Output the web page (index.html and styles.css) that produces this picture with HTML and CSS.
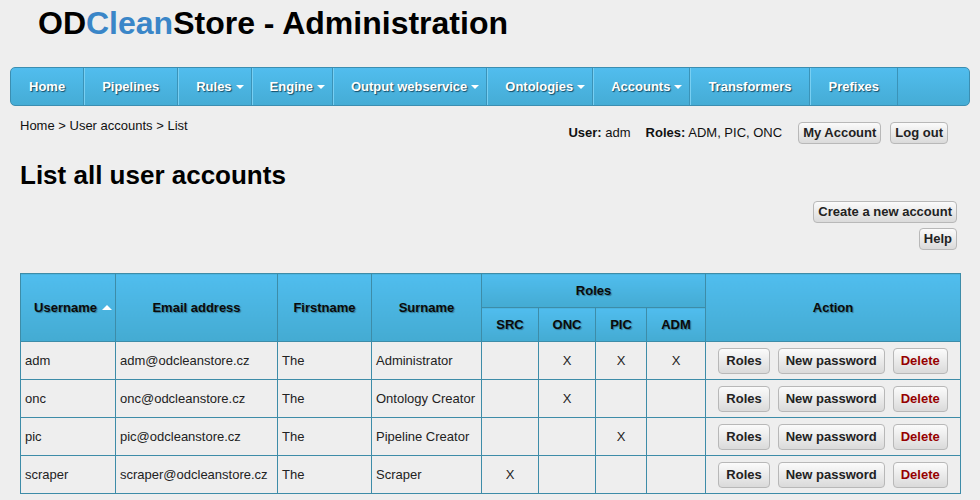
FILE: index.html
```html
<!DOCTYPE html>
<html>
<head>
<meta charset="utf-8">
<title>ODCleanStore - Administration</title>
<link rel="stylesheet" href="styles.css">
</head>
<body>
<h1 class="title">OD<span class="clean">Clean</span>Store - Administration</h1>
<ul class="nav">
  <li class="nav-item">Home</li>
  <li class="nav-item">Pipelines</li>
  <li class="nav-item drop">Rules<span class="caret"></span></li>
  <li class="nav-item drop">Engine<span class="caret"></span></li>
  <li class="nav-item drop">Output webservice<span class="caret"></span></li>
  <li class="nav-item drop">Ontologies<span class="caret"></span></li>
  <li class="nav-item drop">Accounts<span class="caret"></span></li>
  <li class="nav-item">Transformers</li>
  <li class="nav-item">Prefixes</li>
</ul>
<div class="topbar">
  <div class="crumbs">Home &gt; User accounts &gt; List</div>
  <div class="userbox">
    <span class="uinfo"><b>User:</b> adm</span>
    <span class="uinfo roles"><b>Roles:</b> ADM, PIC, ONC</span>
    <button class="btn small">My Account</button>
    <button class="btn small">Log out</button>
  </div>
</div>
<h2 class="heading">List all user accounts</h2>
<div class="actions">
  <button class="btn small">Create a new account</button>
  <button class="btn small">Help</button>
</div>
<table class="grid">
  <colgroup>
    <col style="width:95px"><col style="width:162px"><col style="width:94px"><col style="width:110px">
    <col style="width:57px"><col style="width:57px"><col style="width:51px"><col style="width:59px"><col style="width:255px">
  </colgroup>
  <thead>
    <tr class="hrow">
      <th rowspan="2" class="sorted">Username</th>
      <th rowspan="2">Email address</th>
      <th rowspan="2">Firstname</th>
      <th rowspan="2">Surname</th>
      <th colspan="4">Roles</th>
      <th rowspan="2">Action</th>
    </tr>
    <tr class="hrow">
      <th>SRC</th><th>ONC</th><th>PIC</th><th>ADM</th>
    </tr>
  </thead>
  <tbody>
    <tr>
      <td>adm</td><td>adm@odcleanstore.cz</td><td>The</td><td>Administrator</td>
      <td class="x"></td><td class="x">X</td><td class="x">X</td><td class="x">X</td>
      <td class="act"><div class="btns"><button class="btn big">Roles</button><button class="btn big">New password</button><button class="btn big del">Delete</button></div></td>
    </tr>
    <tr>
      <td>onc</td><td>onc@odcleanstore.cz</td><td>The</td><td>Ontology Creator</td>
      <td class="x"></td><td class="x">X</td><td class="x"></td><td class="x"></td>
      <td class="act"><div class="btns"><button class="btn big">Roles</button><button class="btn big">New password</button><button class="btn big del">Delete</button></div></td>
    </tr>
    <tr>
      <td>pic</td><td>pic@odcleanstore.cz</td><td>The</td><td>Pipeline Creator</td>
      <td class="x"></td><td class="x"></td><td class="x">X</td><td class="x"></td>
      <td class="act"><div class="btns"><button class="btn big">Roles</button><button class="btn big">New password</button><button class="btn big del">Delete</button></div></td>
    </tr>
    <tr>
      <td>scraper</td><td>scraper@odcleanstore.cz</td><td>The</td><td>Scraper</td>
      <td class="x">X</td><td class="x"></td><td class="x"></td><td class="x"></td>
      <td class="act"><div class="btns"><button class="btn big">Roles</button><button class="btn big">New password</button><button class="btn big del">Delete</button></div></td>
    </tr>
  </tbody>
</table>
</body>
</html>
```
FILE: styles.css
```css
html, body {
  margin: 0;
  padding: 0;
  background: #eeeeee;
  font-family: "Liberation Sans", Arial, sans-serif;
  font-size: 13px;
  color: #111;
}

.title {
  margin: 0;
  padding: 5px 0 0 38px;
  font-size: 32px;
  line-height: 37px;
  font-weight: bold;
  color: #000;
}
.clean { color: #3a86c8; }

.nav {
  list-style: none;
  margin: 25px 10px 0;
  padding: 0;
  display: flex;
  height: 37px;
  border: 1px solid #3b8eb1;
  border-radius: 5px;
  background: linear-gradient(#51bdee, #45acd5);
  overflow: hidden;
}
.nav-item {
  line-height: 37px;
  padding: 0 18px;
  color: #fff;
  font-weight: bold;
  text-shadow: 1px 1px 1px rgba(0, 40, 60, 0.75);
  border-right: 1px solid #3b93b8;
  box-shadow: inset 1px 0 0 #78cff2;
  display: flex;
  align-items: center;
}
.nav-item:first-child { box-shadow: none; }
.nav-item.drop { padding-right: 7px; }
.caret {
  display: inline-block;
  width: 0;
  height: 0;
  margin-left: 4px;
  margin-top: 1px;
  border-left: 4px solid transparent;
  border-right: 4px solid transparent;
  border-top: 4px solid #fff;
}

.topbar {
  margin: 12px 20px 0;
  display: flex;
  justify-content: space-between;
  align-items: flex-start;
}
.crumbs { line-height: 16px; }
.userbox {
  margin-top: 4px;
  margin-right: 12px;
  display: flex;
  align-items: center;
}
.uinfo { line-height: 16px; }
.roles { margin-left: 15px; margin-right: 16px; }
.userbox .btn + .btn { margin-left: 9px; }

.btn {
  font-family: "Liberation Sans", Arial, sans-serif;
  font-weight: bold;
  font-size: 13px;
  color: #222;
  background: linear-gradient(#fbfbfb, #dadada);
  border: 1px solid #b8b8b8;
  border-radius: 4px;
  margin: 0;
}
.btn.small {
  height: 22px;
  line-height: 16px;
  padding: 2px 4px;
}
.btn.big {
  height: 26px;
  line-height: 16px;
  padding: 4px 7px;
}
.btn.del { color: #960000; }

.heading {
  margin: 16px 20px 0;
  font-size: 26px;
  line-height: 30px;
  font-weight: bold;
  color: #000;
}

.actions {
  margin: 11px 23px 0 20px;
  display: flex;
  flex-direction: column;
  align-items: flex-end;
  gap: 5px;
}

.grid {
  margin: 23px 20px 0;
  width: 940px;
  table-layout: fixed;
  border-collapse: collapse;
  border: 1px solid #3d8ca8;
}
.grid th, .grid td {
  border: 1px solid #3d8ca8;
  padding: 0;
}
.grid th {
  height: 33px;
  background: linear-gradient(#50bdee, #44abd2);
  font-weight: bold;
  color: #0a0a0a;
  text-shadow: 1px 1px 1px rgba(0, 0, 0, 0.35);
  text-align: center;
}
.grid th.sorted {
  position: relative;
  padding-right: 5px;
}
.grid th.sorted::after {
  content: "";
  position: absolute;
  right: 3px;
  top: 50%;
  margin-top: -3px;
  border-left: 5px solid transparent;
  border-right: 5px solid transparent;
  border-bottom: 5px solid #fff;
}
.grid td {
  height: 37px;
  padding-left: 4px;
  color: #222;
  white-space: nowrap;
}
.grid td.x {
  text-align: center;
  padding-left: 0;
}
.grid td.act { padding: 0; }
.btns {
  display: flex;
  justify-content: center;
  gap: 8px;
}
```
